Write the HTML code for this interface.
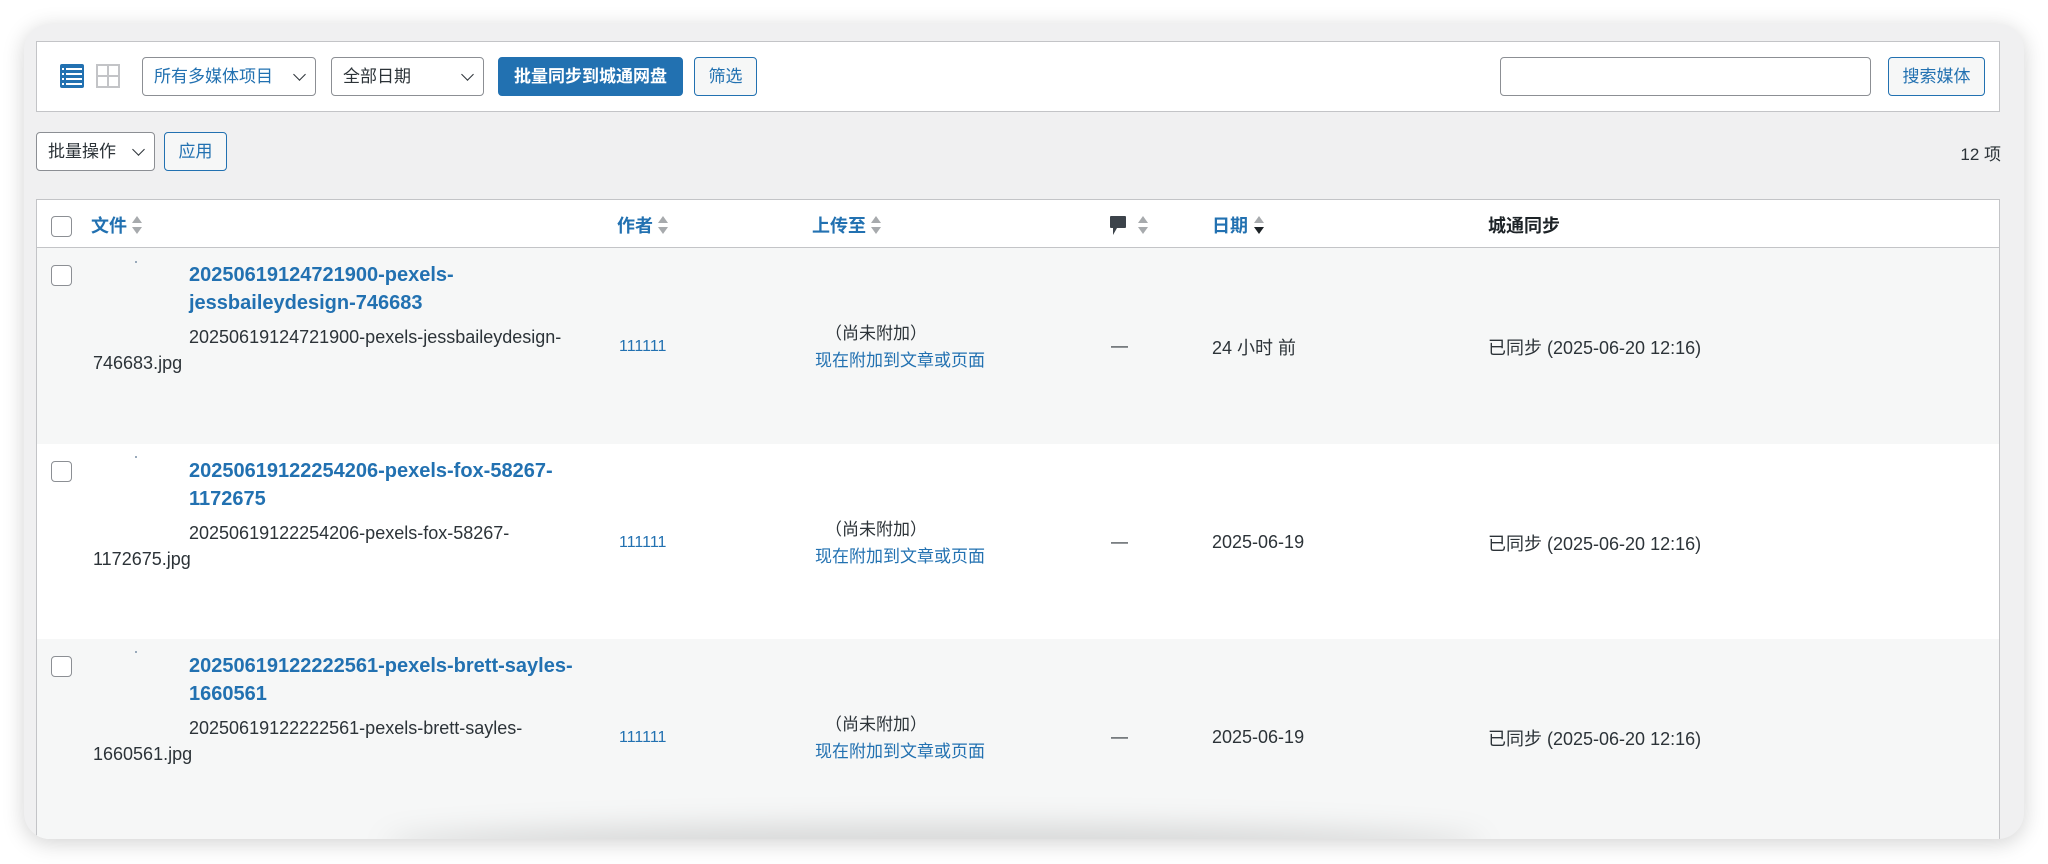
<!DOCTYPE html>
<html><head><meta charset="utf-8"><style>
*{box-sizing:border-box;margin:0;padding:0}
body{width:2048px;height:864px;background:#fff;font-family:"Liberation Sans","Noto Sans CJK SC",sans-serif;font-size:17px;color:#2c3338;position:relative;overflow:hidden}
.card{position:absolute;left:24px;top:24px;width:2000px;height:815px;background:#f0f0f1;border-radius:26px;box-shadow:0 4px 22px rgba(0,0,0,.18);overflow:hidden}
.a{position:absolute;white-space:nowrap}
.bar{position:absolute;left:12px;top:17px;width:1964px;height:71px;background:#fff;border:1px solid #c3c4c7}
.sel{position:absolute;height:39px;border:1px solid #8c8f94;border-radius:4px;background:#fff;line-height:37px;padding-left:11px;font-size:17px}
.sel .chev{position:absolute;right:11px;top:12px;width:9px;height:9px;border-right:1.5px solid #2c3338;border-bottom:1.5px solid #2c3338;transform:rotate(45deg)}
.btn{position:absolute;height:39px;border:1px solid #2271b1;border-radius:4px;background:#f6f7f7;color:#2271b1;line-height:37px;text-align:center;font-size:17px}
.cb{position:absolute;width:21px;height:21px;border:1px solid #8c8f94;border-radius:4px;background:#fff}
.tbl{position:absolute;left:12px;top:175px;width:1964px;height:660px;border:1px solid #c3c4c7;background:#fff}
.hd{position:absolute;left:0;top:0;width:100%;height:48px;border-bottom:1px solid #c3c4c7;background:#fff}
.row{position:absolute;left:0;width:100%}
.lk{color:#2271b1}
.b{font-weight:bold}
.t{font-size:20px;line-height:28px}
.f{font-size:18px;line-height:27px}
.hl{font-size:18px}
</style></head><body>
<div class="card">
 <div class="bar">
  <svg class="a" style="left:22px;top:22px" width="26" height="24" viewBox="0 0 26 24"><rect x="1" y="0" width="24" height="24" rx="2" fill="#2271b1"/><g fill="#fff"><rect x="3" y="4" width="2" height="2"/><rect x="7" y="4" width="16" height="2"/><rect x="3" y="9" width="2" height="2"/><rect x="7" y="9" width="16" height="2"/><rect x="3" y="14" width="2" height="2"/><rect x="7" y="14" width="16" height="2"/><rect x="3" y="19" width="2" height="2"/><rect x="7" y="19" width="16" height="2"/></g></svg>
  <svg class="a" style="left:59px;top:22px" width="24" height="24" viewBox="0 0 24 24"><rect x="1" y="1" width="22" height="22" fill="none" stroke="#c3c4c7" stroke-width="2"/><path d="M12 1V23M1 12H23" stroke="#c3c4c7" stroke-width="2"/></svg>
 </div>
 <div class="sel lk" style="left:118px;top:33px;width:174px;color:#2271b1">所有多媒体项目<span class="chev"></span></div>
 <div class="sel" style="left:307px;top:33px;width:153px">全部日期<span class="chev"></span></div>
 <div class="btn" style="left:474px;top:33px;width:185px;background:#2271b1;color:#fff;font-weight:bold">批量同步到城通网盘</div>
 <div class="btn" style="left:670px;top:33px;width:63px">筛选</div>
 <div class="a" style="left:1476px;top:33px;width:371px;height:39px;border:1px solid #8c8f94;border-radius:4px;background:#fff"></div>
 <div class="btn" style="left:1864px;top:33px;width:97px">搜索媒体</div>

 <div class="sel" style="left:12px;top:108px;width:119px">批量操作<span class="chev"></span></div>
 <div class="btn" style="left:140px;top:108px;width:63px">应用</div>
 <div class="a" style="right:23px;top:116px;font-size:17px">12 项</div>

 <div class="tbl">
  <div class="hd">
   <div class="cb" style="left:14px;top:16px"></div>
   <div class="a lk b hl" style="left:54px;top:12px">文件</div>
   <svg class="a" style="left:94px;top:15px" width="12" height="20"><path d="M6 1L11 8H1z M6 19L11 12H1z" fill="#a7aaad"/></svg>
   <div class="a lk b hl" style="left:580px;top:12px">作者</div>
   <svg class="a" style="left:620px;top:15px" width="12" height="20"><path d="M6 1L11 8H1z M6 19L11 12H1z" fill="#a7aaad"/></svg>
   <div class="a lk b hl" style="left:775px;top:12px">上传至</div>
   <svg class="a" style="left:833px;top:15px" width="12" height="20"><path d="M6 1L11 8H1z M6 19L11 12H1z" fill="#a7aaad"/></svg>
   <svg class="a" style="left:1072px;top:15px" width="18" height="22"><path d="M2 1H16Q17 1 17 2V12Q17 13 16 13H8L4 20V13H2Q1 13 1 12V2Q1 1 2 1Z" fill="#3c434a"/></svg>
   <svg class="a" style="left:1100px;top:15px" width="12" height="20"><path d="M6 1L11 8H1z M6 19L11 12H1z" fill="#a7aaad"/></svg>
   <div class="a lk b hl" style="left:1175px;top:12px">日期</div>
   <svg class="a" style="left:1216px;top:15px" width="12" height="20"><path d="M6 1L11 8H1z" fill="#a7aaad"/><path d="M6 19L11 12H1z" fill="#1d2327"/></svg>
   <div class="a b hl" style="left:1451px;top:12px;color:#1d2327">城通同步</div>
  </div>

  <div class="row" style="top:48px;height:196px;background:#f6f7f7">
   <div class="cb" style="left:14px;top:17px"></div>
   <div class="a" style="left:98px;top:13px;width:2px;height:2px;background:#9ab"></div>
   <div class="a lk b t" style="left:152px;top:13px">20250619124721900-pexels-<br>jessbaileydesign-746683</div>
   <div class="a f" style="left:152px;top:76px">20250619124721900-pexels-jessbaileydesign-</div>
   <div class="a f" style="left:56px;top:102px">746683.jpg</div>
   <div class="a lk" style="left:582px;top:90px;font-size:16px">111111</div>
   <div class="a" style="left:788px;top:71px;font-size:17px">（尚未附加）</div>
   <div class="a lk" style="left:778px;top:98px;font-size:17px">现在附加到文章或页面</div>
   <div class="a" style="left:1074px;top:88px">—</div>
   <div class="a" style="left:1175px;top:86px;font-size:18px">24 小时 前</div>
   <div class="a" style="left:1451px;top:86px;font-size:18px">已同步 (2025-06-20 12:16)</div>
  </div>

  <div class="row" style="top:244px;height:195px;background:#fff">
   <div class="cb" style="left:14px;top:17px"></div>
   <div class="a" style="left:98px;top:12px;width:2px;height:2px;background:#9ab"></div>
   <div class="a lk b t" style="left:152px;top:13px">20250619122254206-pexels-fox-58267-<br>1172675</div>
   <div class="a f" style="left:152px;top:76px">20250619122254206-pexels-fox-58267-</div>
   <div class="a f" style="left:56px;top:102px">1172675.jpg</div>
   <div class="a lk" style="left:582px;top:90px;font-size:16px">111111</div>
   <div class="a" style="left:788px;top:71px;font-size:17px">（尚未附加）</div>
   <div class="a lk" style="left:778px;top:98px;font-size:17px">现在附加到文章或页面</div>
   <div class="a" style="left:1074px;top:88px">—</div>
   <div class="a" style="left:1175px;top:88px;font-size:18px">2025-06-19</div>
   <div class="a" style="left:1451px;top:86px;font-size:18px">已同步 (2025-06-20 12:16)</div>
  </div>

  <div class="row" style="top:439px;height:221px;background:#f6f7f7">
   <div class="cb" style="left:14px;top:17px"></div>
   <div class="a" style="left:98px;top:12px;width:2px;height:2px;background:#9ab"></div>
   <div class="a lk b t" style="left:152px;top:13px">20250619122222561-pexels-brett-sayles-<br>1660561</div>
   <div class="a f" style="left:152px;top:76px">20250619122222561-pexels-brett-sayles-</div>
   <div class="a f" style="left:56px;top:102px">1660561.jpg</div>
   <div class="a lk" style="left:582px;top:90px;font-size:16px">111111</div>
   <div class="a" style="left:788px;top:71px;font-size:17px">（尚未附加）</div>
   <div class="a lk" style="left:778px;top:98px;font-size:17px">现在附加到文章或页面</div>
   <div class="a" style="left:1074px;top:88px">—</div>
   <div class="a" style="left:1175px;top:88px;font-size:18px">2025-06-19</div>
   <div class="a" style="left:1451px;top:86px;font-size:18px">已同步 (2025-06-20 12:16)</div>
  </div>
 </div>
 <div class="a" style="left:360px;top:800px;width:1100px;height:40px;border-radius:50%;background:rgba(0,0,0,.12);filter:blur(14px)"></div>
</div>
</body></html>
